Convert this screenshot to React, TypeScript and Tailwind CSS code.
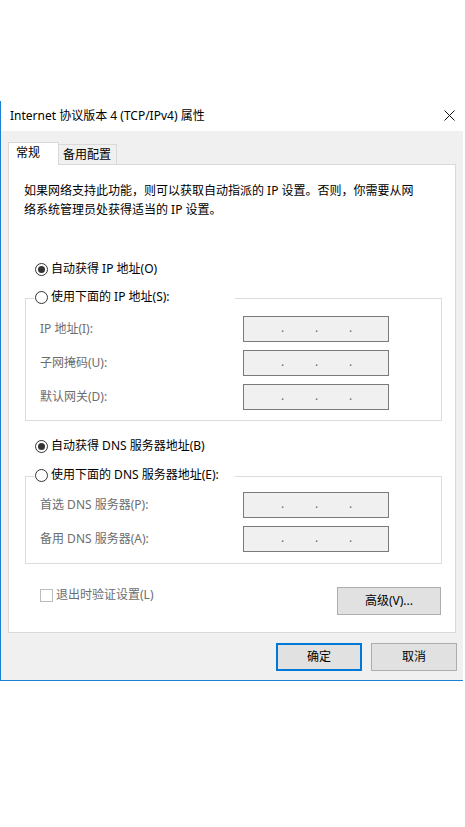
import React from "react";

function Radio({ checked, label }: { checked?: boolean; label: string }) {
  return (
    <div className="flex h-[20px] items-center">
      <span className="flex h-[13px] w-[13px] items-center justify-center rounded-full border border-[#333333] bg-white">
        {checked && <span className="h-[7px] w-[7px] rounded-full bg-[#333333]" />}
      </span>
      <span className="ml-[3px] leading-[20px]">{label}</span>
    </div>
  );
}

function IpRow({ label }: { label: string }) {
  return (
    <div className="flex h-[26px] items-center">
      <span className="w-[217px] pl-[14px] leading-[20px] text-[#6d6d6d]">{label}</span>
      <div className="flex h-[26px] w-[146px] items-start gap-[31px] border border-[#7a7a7a] bg-[#f0f0f0] pl-[37px] pt-[5px]">
        <span className="w-[3px] leading-[12px] text-[#6d6d6d]">.</span>
        <span className="w-[3px] leading-[12px] text-[#6d6d6d]">.</span>
        <span className="w-[3px] leading-[12px] text-[#6d6d6d]">.</span>
      </div>
    </div>
  );
}

function GroupBox({
  label,
  children,
  className,
}: {
  label: string;
  children: React.ReactNode;
  className: string;
}) {
  return (
    <fieldset className={`ml-[16px] w-[417px] border border-[#dcdcdc] ${className}`}>
      <legend className="ml-[8px] h-[22px] w-[201px] bg-white pl-[1px]">
        <Radio label={label} />
      </legend>
      {children}
    </fieldset>
  );
}

export default function App() {
  return (
    <div className="h-[827px] w-[465px] bg-white font-['Noto_Sans','Noto_Sans_CJK_SC',sans-serif] text-[12px] text-black">
      <div className="h-[101px]" />
      <div className="w-[463px] border-b border-l border-[#1c7fd0]">
        {/* title bar */}
        <div className="flex h-[30px] items-center justify-between bg-white pl-[9px] pr-[8px]">
          <span className="leading-[20px]">Internet 协议版本 4 (TCP/IPv4) 属性</span>
          <svg width="11" height="11" viewBox="0 0 11 11" className="mt-[-1px]">
            <path d="M0.5 0.5 L10.5 10.5 M10.5 0.5 L0.5 10.5" stroke="#111111" strokeWidth="1" />
          </svg>
        </div>

        {/* body */}
        <div className="bg-[#f0f0f0] pb-[9px] pl-[7px] pt-[11px]">
          <div className="relative z-10 -mb-px flex h-[23px] items-end">
            <div className="flex h-[23px] w-[51px] items-center border-l border-r border-t border-[#d9d9d9] bg-white pl-[7px] pb-[2px]">
              常规
            </div>
            <div className="flex h-[21px] w-[58px] items-center border-b border-r border-t border-[#d9d9d9] bg-[#f0f0f0] pl-[4px]">
              备用配置
            </div>
          </div>

          <div className="h-[469px] w-[448px] border border-[#d9d9d9] bg-white">
            <p className="pl-[15px] pt-[16px] leading-[19px]">
              如果网络支持此功能，则可以获取自动指派的 IP 设置。否则，你需要从网
              <br />
              络系统管理员处获得适当的 IP 设置。
            </p>

            <div className="ml-[26px] mt-[40px]">
              <Radio checked label="自动获得 IP 地址(O)" />
            </div>

            <GroupBox label="使用下面的 IP 地址(S):" className="mt-[8px] pb-[10px]">
              <div className="mt-[7px] flex flex-col gap-[8px]">
                <IpRow label="IP 地址(I):" />
                <IpRow label="子网掩码(U):" />
                <IpRow label="默认网关(D):" />
              </div>
            </GroupBox>

            <div className="ml-[26px] mt-[15px]">
              <Radio checked label="自动获得 DNS 服务器地址(B)" />
            </div>

            <GroupBox label="使用下面的 DNS 服务器地址(E):" className="mt-[9px] pb-[11px]">
              <div className="mt-[5px] flex flex-col gap-[8px]">
                <IpRow label="首选 DNS 服务器(P):" />
                <IpRow label="备用 DNS 服务器(A):" />
              </div>
            </GroupBox>

            <div className="mt-[21px] flex items-start justify-between pl-[31px] pr-[14px]">
              <div className="flex h-[20px] items-center">
                <span className="h-[13px] w-[13px] border border-[#bcbcbc] bg-white" />
                <span className="ml-[3px] leading-[20px] text-[#6d6d6d]">退出时验证设置(L)</span>
              </div>
              <button className="mt-[2px] flex h-[28px] w-[104px] items-center justify-center border border-[#adadad] bg-[#e1e1e1] leading-[20px]">
                高级(V)...
              </button>
            </div>
          </div>

          <div className="mt-[10px] flex w-[449px] justify-end gap-[9px]">
            <button className="flex h-[28px] w-[86px] items-center justify-center border-2 border-[#0078d7] bg-[#e1e1e1] leading-[20px]">
              确定
            </button>
            <button className="flex h-[28px] w-[86px] items-center justify-center border border-[#adadad] bg-[#e1e1e1] leading-[20px]">
              取消
            </button>
          </div>
        </div>
      </div>
    </div>
  );
}
